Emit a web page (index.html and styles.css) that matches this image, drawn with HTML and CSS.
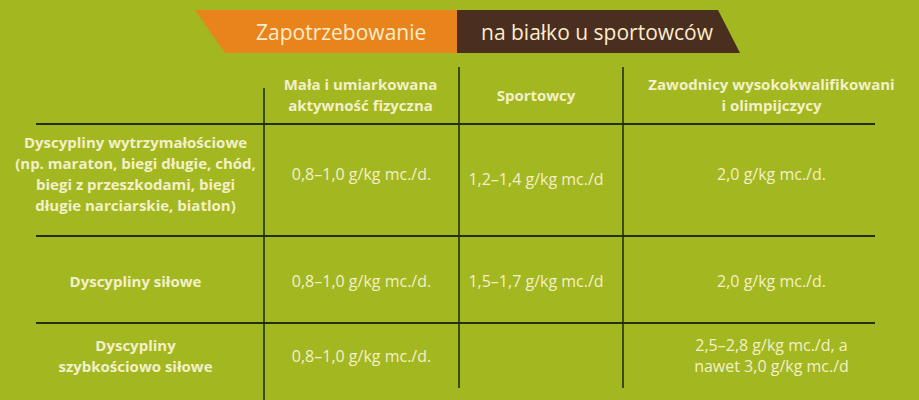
FILE: index.html
```html
<!DOCTYPE html>
<html lang="pl">
<head>
<meta charset="utf-8">
<link rel="stylesheet" href="styles.css">
</head>
<body>
<div class="page">
  <div class="banner">
    <div class="banner-part orange">Zapotrzebowanie</div>
    <div class="banner-part brown">na białko u sportowców</div>
  </div>

  <div class="row head">
    <div class="cell c0"></div>
    <div class="cell c1 first-head">Mała i umiarkowana<br>aktywność fizyczna</div>
    <div class="cell c2">Sportowcy</div>
    <div class="cell c3">Zawodnicy wysokokwalifikowani<br>i olimpijczycy</div>
  </div>
  <div class="rule"></div>

  <div class="row r1">
    <div class="cell c0 rowhead">Dyscypliny wytrzymałościowe<br>(np. maraton, biegi długie, chód,<br>biegi z przeszkodami, biegi<br>długie narciarskie, biatlon)</div>
    <div class="cell c1 val">0,8–1,0 g/kg mc./d.</div>
    <div class="cell c2 val low">1,2–1,4 g/kg mc./d</div>
    <div class="cell c3 val">2,0 g/kg mc./d.</div>
  </div>
  <div class="rule"></div>

  <div class="row r2">
    <div class="cell c0 rowhead">Dyscypliny siłowe</div>
    <div class="cell c1 val">0,8–1,0 g/kg mc./d.</div>
    <div class="cell c2 val">1,5–1,7 g/kg mc./d</div>
    <div class="cell c3 val">2,0 g/kg mc./d.</div>
  </div>
  <div class="rule"></div>

  <div class="row r3">
    <div class="cell c0 rowhead">Dyscypliny<br>szybkościowo siłowe</div>
    <div class="cell c1 val tall">0,8–1,0 g/kg mc./d.</div>
    <div class="cell c2 val"></div>
    <div class="cell c3 val">2,5–2,8 g/kg mc./d, a<br>nawet 3,0 g/kg mc./d</div>
  </div>
</div>
</body>
</html>
```

FILE: styles.css
```css
html, body {
  margin: 0;
  padding: 0;
  background: #a3b721;
}
body {
  width: 919px;
  height: 400px;
  overflow: hidden;
  font-family: "Open Sans", "Noto Sans", sans-serif;
  color: #f3f0c9;
}
.page {
  padding-top: 10px;
}
.banner {
  display: flex;
  margin-left: 195px;
  height: 43px;
}
.banner-part {
  display: flex;
  align-items: center;
  font-size: 21px;
  color: #fbeccb;
  box-sizing: border-box;
  white-space: nowrap;
}
.orange {
  width: 262px;
  padding-left: 61px;
  background: #e8841b;
  clip-path: polygon(0 0, 100% 0, 100% 100%, 30px 100%);
}
.brown {
  width: 283px;
  padding-left: 24px;
  background: #4a2e1f;
  clip-path: polygon(0 0, 261px 0, 100% 100%, 0 100%);
}

.row {
  display: grid;
  grid-template-columns: 263px 195px 164px 1fr;
}
.head {
  margin-top: 14px;
  height: 56px;
}
.cell {
  display: flex;
  align-items: center;
  justify-content: center;
  text-align: center;
  box-sizing: border-box;
  white-space: nowrap;
}
.c1, .c2, .c3 {
  border-left: 2px solid #3b4c12;
}
.head .cell {
  font-weight: 700;
  font-size: 15px;
  line-height: 21px;
}
.head .first-head {
  border-left: none;
  background: linear-gradient(#3b4c12, #3b4c12) no-repeat left bottom / 2px 35px;
}
.head .c2 {
  padding-right: 10px;
}
.c0 {
  padding-left: 8px;
}
.c2 {
  padding-right: 10px;
}
.rowhead {
  font-weight: 700;
  font-size: 15px;
  line-height: 21px;
}
.val {
  font-size: 16px;
  line-height: 21px;
}
.r1 {
  height: 110px;
}
.r1 .cell {
  padding-bottom: 12px;
}
.r1 .c0 {
  padding-bottom: 13px;
}
.r1 .low {
  padding-bottom: 2px;
}
.r2 {
  height: 85px;
}
.r2 .cell {
  padding-top: 4px;
}
.r3 {
  align-items: start;
}
.r3 .cell {
  height: 64px;
}
.r3 .tall {
  height: 76px;
  padding-bottom: 12px;
}
.rule {
  height: 2px;
  margin: 0 44px 0 36px;
  background: #23300b;
}
```
